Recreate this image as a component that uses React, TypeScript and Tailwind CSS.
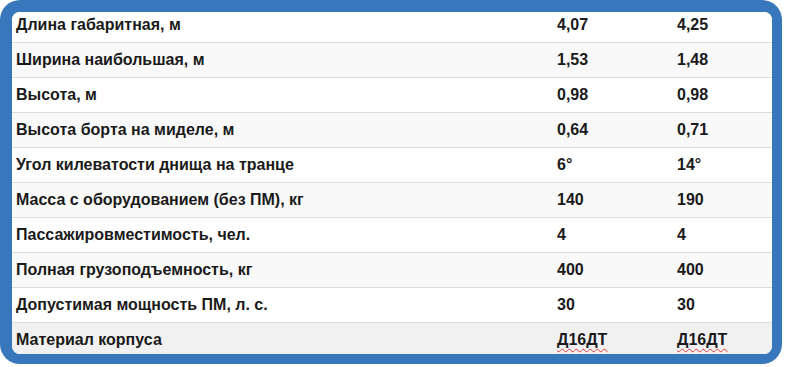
const rows: { label: string; a: string; b: string; spell?: boolean }[] = [
  { label: "Длина габаритная, м", a: "4,07", b: "4,25" },
  { label: "Ширина наибольшая, м", a: "1,53", b: "1,48" },
  { label: "Высота, м", a: "0,98", b: "0,98" },
  { label: "Высота борта на миделе, м", a: "0,64", b: "0,71" },
  { label: "Угол килеватости днища на транце", a: "6°", b: "14°" },
  { label: "Масса с оборудованием (без ПМ), кг", a: "140", b: "190" },
  { label: "Пассажировместимость, чел.", a: "4", b: "4" },
  { label: "Полная грузоподъемность, кг", a: "400", b: "400" },
  { label: "Допустимая мощность ПМ, л. с.", a: "30", b: "30" },
  { label: "Материал корпуса", a: "Д16ДТ", b: "Д16ДТ", spell: true },
];

function Value({ text, spell }: { text: string; spell?: boolean }) {
  return (
    <span
      className={
        spell
          ? "underline decoration-wavy decoration-[#e23b3b] decoration-1 underline-offset-[3px]"
          : ""
      }
    >
      {text}
    </span>
  );
}

export default function App() {
  return (
    <div className="h-[367px] w-[786px] bg-white">
      <div className="h-[364px] w-[782px] rounded-[20px] bg-[#3877bb] pb-[10px] pl-[12px] pr-[10px] pt-[12px]">
        <div className="h-[342px] overflow-hidden rounded-[8px] bg-white font-['Liberation_Sans',Arial,sans-serif] text-[16px] font-bold text-[#1a1a1a]">
          <div className="-mt-[4px]">
            {rows.map((r, i) => (
              <div
                key={i}
                className={
                  "flex h-[35px] items-center border-b border-[#dddddd] " +
                  (i === rows.length - 1
                    ? "bg-[#f1f1f1]"
                    : i % 2 === 1
                      ? "bg-[#f9f9f9]"
                      : "bg-white")
                }
              >
                <div className="w-[545px] pl-[4px]">{r.label}</div>
                <div className="w-[120px]">
                  <Value text={r.a} spell={r.spell} />
                </div>
                <div>
                  <Value text={r.b} spell={r.spell} />
                </div>
              </div>
            ))}
          </div>
        </div>
      </div>
    </div>
  );
}
